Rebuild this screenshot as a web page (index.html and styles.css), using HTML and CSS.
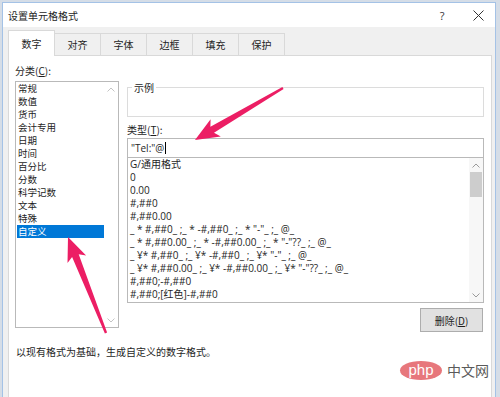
FILE: index.html
```html
<!DOCTYPE html>
<html lang="zh-CN">
<head>
    <meta charset="UTF-8">
    <title>设置单元格格式</title>
    <link rel="stylesheet" href="styles.css">
</head>
<body>

<div class="dialog">
    <!-- Title bar -->
    <div class="titlebar">
        <span class="title">设置单元格格式</span>
        <span class="title-btn">?</span>
        <span class="title-btn">
            <svg width="11" height="11" viewBox="0 0 11 11"><path d="M0.5 0.5 L10.5 10.5 M10.5 0.5 L0.5 10.5" stroke="#333" stroke-width="1" fill="none"/></svg>
        </span>
    </div>

    <!-- Tabs -->
    <div class="tabs">
        <div class="tab active">数字</div>
        <div class="tab">对齐</div>
        <div class="tab">字体</div>
        <div class="tab">边框</div>
        <div class="tab">填充</div>
        <div class="tab">保护</div>
    </div>

    <div class="panel">
        <div class="cols">
            <div class="col-left">
                <div class="label">分类(<u>C</u>):</div>
                <div class="listbox cat">
                    <ul class="items">
                        <li>常规</li>
                        <li>数值</li>
                        <li>货币</li>
                        <li>会计专用</li>
                        <li>日期</li>
                        <li>时间</li>
                        <li>百分比</li>
                        <li>分数</li>
                        <li>科学记数</li>
                        <li>文本</li>
                        <li>特殊</li>
                        <li class="selected">自定义</li>
                    </ul>
                    <div class="vscroll faint">
                        <div class="sb-arrow"><svg width="8" height="5" viewBox="0 0 8 5"><path d="M0.5 4.5 L4 1 L7.5 4.5" /></svg></div>
                        <div class="sb-space"></div>
                        <div class="sb-arrow"><svg width="8" height="5" viewBox="0 0 8 5"><path d="M0.5 0.5 L4 4 L7.5 0.5" /></svg></div>
                    </div>
                </div>
            </div>

            <div class="col-right">
                <fieldset class="sample">
                    <legend>示例</legend>
                </fieldset>
                <div class="label type-label">类型(<u>T</u>):</div>
                <div class="typebox">"Tel:"@<span class="caret"></span></div>
                <div class="listbox fmt">
                    <ul class="items">
                        <li>G/通用格式</li>
                        <li>0</li>
                        <li>0.00</li>
                        <li>#,##0</li>
                        <li>#,##0.00</li>
                        <li>_ * #,##0_ ;_ * -#,##0_ ;_ * "-"_ ;_ @_</li>
                        <li>_ * #,##0.00_ ;_ * -#,##0.00_ ;_ * "-"??_ ;_ @_</li>
                        <li>_ ¥* #,##0_ ;_ ¥* -#,##0_ ;_ ¥* "-"_ ;_ @_</li>
                        <li>_ ¥* #,##0.00_ ;_ ¥* -#,##0.00_ ;_ ¥* "-"??_ ;_ @_</li>
                        <li>#,##0;-#,##0</li>
                        <li>#,##0;[红色]-#,##0</li>
                    </ul>
                    <div class="vscroll">
                        <div class="sb-arrow"><svg width="8" height="5" viewBox="0 0 8 5"><path d="M0.5 4.5 L4 1 L7.5 4.5" /></svg></div>
                        <div class="sb-thumb"></div>
                        <div class="sb-space"></div>
                        <div class="sb-arrow"><svg width="8" height="5" viewBox="0 0 8 5"><path d="M0.5 0.5 L4 4 L7.5 0.5" /></svg></div>
                    </div>
                </div>
                <div class="btn-row">
                    <button class="btn">删除(<u>D</u>)</button>
                </div>
            </div>
        </div>
        <p class="desc">以现有格式为基础，生成自定义的数字格式。</p>
    </div>
</div>

<!-- Annotation arrows drawn over the dialog -->
<svg class="arrows" width="500" height="397" viewBox="0 0 500 397">
    <polygon points="283.6,89.0 214.0,132.8 220.8,136.4 195,140 210.6,119.2 210.4,126.8 282.4,87.0" />
    <polygon points="107.1,332.6 78.7,254.3 86.1,255.6 68,237 67.5,263.0 72.1,256.9 104.9,333.4" />
</svg>

<!-- Watermark -->
<div class="watermark">
    <span class="wm-php">php</span>
    <span class="wm-cn">中文网</span>
</div>

</body>
</html>
```

FILE: styles.css
```css
* {
    margin: 0;
    padding: 0;
    box-sizing: border-box;
}

body {
    width: 500px;
    height: 397px;
    overflow: hidden;
    position: relative;
    background: #d5dde7;
    font-family: "Open Sans", "Noto Sans CJK SC", sans-serif;
    font-size: 10px;
    color: #1e1e1e;
}

.dialog {
    margin: 2px 0 0 2px;
    width: 494px;
    height: 400px;
    background: #f0f0f0;
    border: 1px solid #a4c2e6;
}

/* Title bar */
.titlebar {
    height: 24px;
    background: #fff;
    display: flex;
    align-items: center;
    padding-left: 5px;
}

.title {
    flex: 1;
    font-family: "Noto Sans CJK SC", sans-serif;
}

.title-btn {
    width: 34px;
    height: 24px;
    margin-left: 2px;
    display: flex;
    align-items: center;
    justify-content: center;
    font-size: 11px;
    color: #333;
}

/* Tabs */
.tabs {
    height: 28px;
    display: flex;
    align-items: flex-end;
    padding-left: 5px;
}

.tab {
    width: 47px;
    height: 22px;
    margin-left: -1px;
    border: 1px solid #d9d9d9;
    border-bottom: none;
    display: flex;
    align-items: center;
    justify-content: center;
    font-family: "Noto Sans CJK SC", sans-serif;
}

.tab:first-child {
    margin-left: 0;
}

.tab.active {
    height: 26px;
    margin-bottom: -1px;
    background: #fff;
    position: relative;
    z-index: 1;
}

/* Panel */
.panel {
    height: 350px;
    margin: 0 3px 0 5px;
    background: #fff;
    border: 1px solid #d9d9d9;
    padding: 8px 5px 0 6px;
}

.cols {
    display: flex;
    gap: 8px;
}

.col-left {
    width: 104px;
}

.col-right {
    width: 357px;
}

.label {
    height: 13px;
    line-height: 13px;
    font-family: "Noto Sans CJK SC", sans-serif;
}

.col-left .label {
    margin-bottom: 4px;
}

.listbox {
    display: flex;
    border: 1px solid #b9b9b9;
    background: #fff;
}

.items {
    flex: 1;
    list-style: none;
    padding-left: 1px;
}

.items li {
    height: 13px;
    line-height: 13px;
    padding-left: 1px;
    white-space: nowrap;
}

.cat {
    height: 247px;
}

.cat .items li {
    font-family: "Noto Sans CJK SC", sans-serif;
    font-size: 9.5px;
}

.cat .items li.selected {
    background: #0078d7;
    color: #fff;
}

/* Scrollbars */
.vscroll {
    width: 14px;
    display: flex;
    flex-direction: column;
    background: #f7f7f7;
}

.sb-arrow {
    height: 14px;
    display: flex;
    align-items: center;
    justify-content: center;
}

.sb-arrow path {
    fill: none;
    stroke: #9a9a9a;
    stroke-width: 1;
}

.vscroll.faint {
    background: #fff;
}

.vscroll.faint path {
    stroke: #c4c4c4;
}

.sb-thumb {
    height: 25px;
    margin: 0 1px;
    background: #cdcdcd;
}

.sb-space {
    flex: 1;
}

/* Right column */
.sample {
    margin-top: 17px;
    height: 36px;
    border: 1px solid #dcdcdc;
    padding: 0 0 0 4px;
}

.sample legend {
    padding: 0 2px;
    line-height: 13px;
    font-family: "Noto Sans CJK SC", sans-serif;
}

.type-label {
    margin-top: 6px;
}

.typebox {
    margin-top: 2px;
    height: 20px;
    border: 1px solid #b9b9b9;
    padding-left: 3px;
    line-height: 18px;
    display: flex;
    align-items: center;
}

.caret {
    width: 1px;
    height: 12px;
    margin-left: 1px;
    background: #000;
}

.fmt {
    margin-top: -1px;
    height: 146px;
}

.btn-row {
    display: flex;
    justify-content: flex-end;
    padding-right: 1px;
    margin-top: 5px;
}

.btn {
    width: 63px;
    height: 24px;
    background: #e1e1e1;
    border: 1px solid #adadad;
    font-family: "Noto Sans CJK SC", sans-serif;
    font-size: 10px;
    color: #1e1e1e;
}

.desc {
    margin-top: 13px;
    padding-left: 1px;
    line-height: 13px;
    font-family: "Noto Sans CJK SC", sans-serif;
}

/* Overlays */
.arrows {
    position: absolute;
    top: 0;
    left: 0;
    pointer-events: none;
}

.arrows polygon {
    fill: #ec1e64;
}

.watermark {
    position: absolute;
    left: 400px;
    top: 360px;
    display: flex;
    align-items: center;
    gap: 5px;
}

.wm-php {
    width: 42px;
    height: 19px;
    border-radius: 50%;
    background: #e7777c;
    color: #fff;
    font-family: "Liberation Sans", sans-serif;
    font-size: 15px;
    line-height: 18px;
    text-align: center;
}

.wm-cn {
    font-family: "Noto Sans CJK SC", sans-serif;
    font-size: 14px;
    color: #5a5a5a;
}
```
